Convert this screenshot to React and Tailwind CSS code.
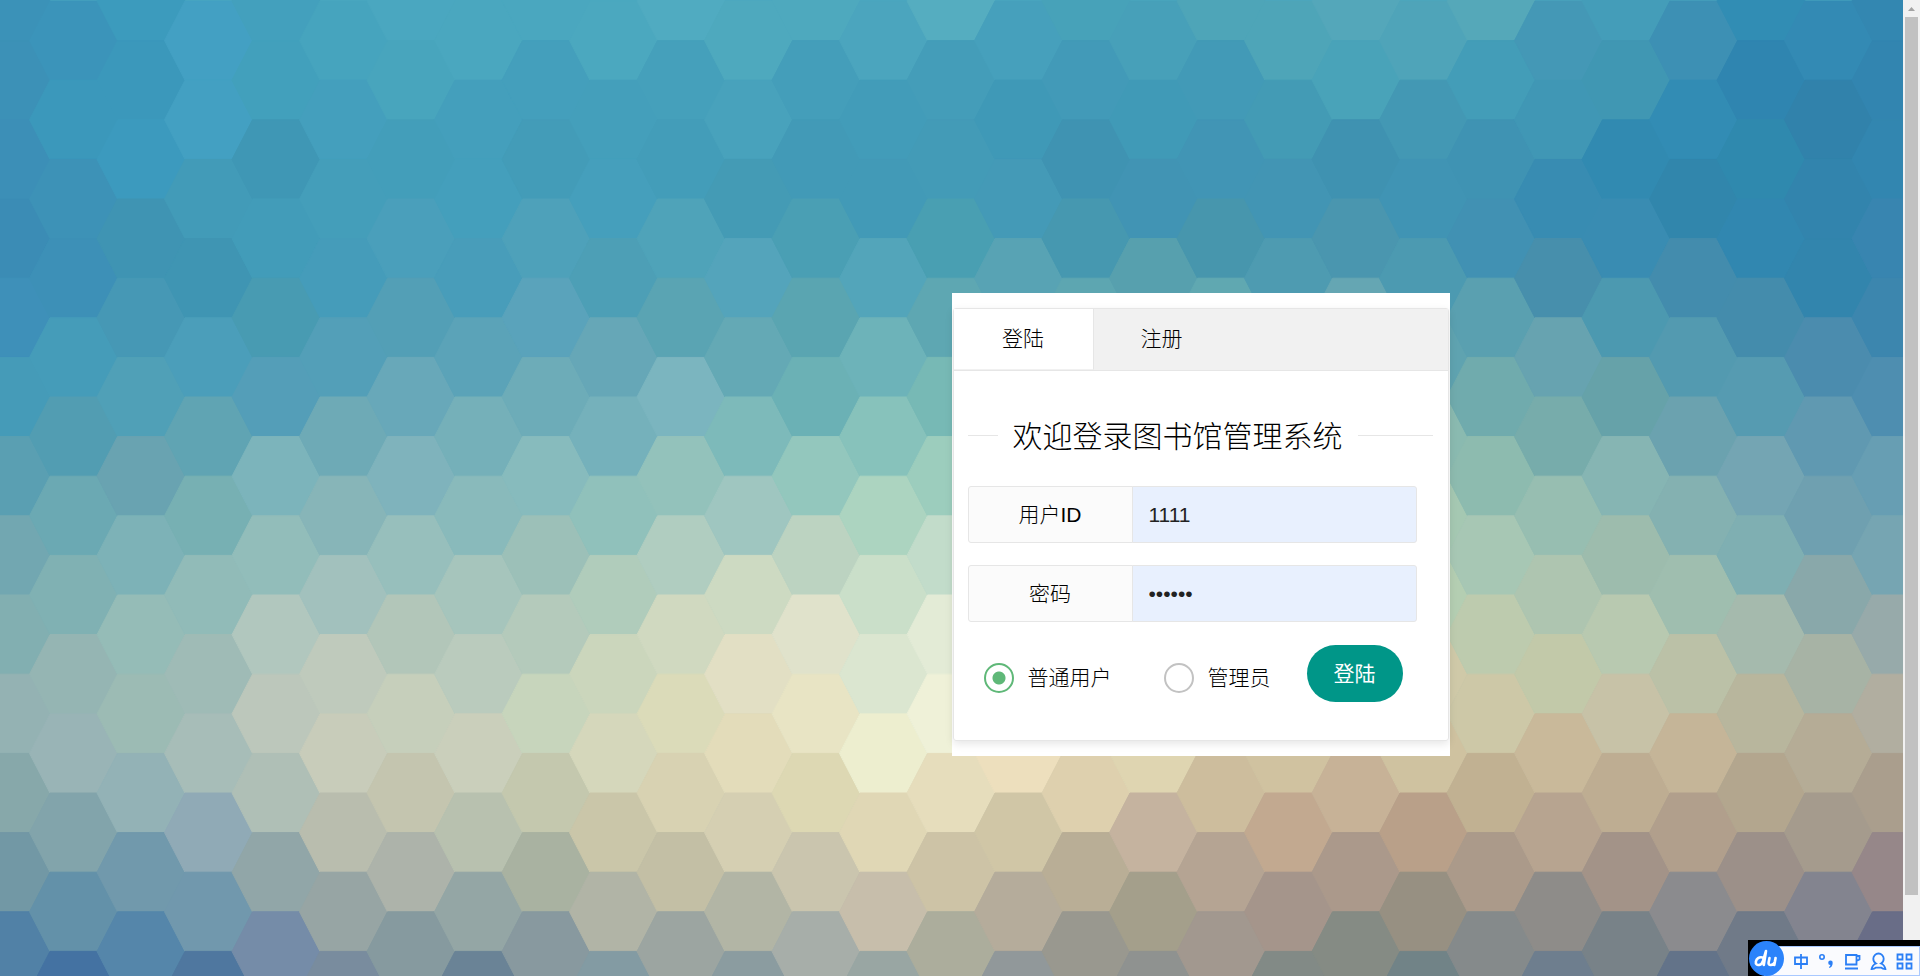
import React, { useState } from 'react';

// Honeycomb colours, one line per column, top to bottom
const COLUMNS = [
    '3b92b8 3c91b7 3c8fb7 3b8cb5 3e90b9 459bb8 5a9fb2 72a7b1 82afb1 94b2b3 87a8aa 7298a5 5181a6',
    '3b94ba 3b98bb 3d92b7 3d90b7 459cb9 529db2 6ba9b3 80b1b3 95b5b3 99b4b6 82a4ab 6391a9 4472a2',
    '3c9bbd 3b98bb 3c9abe 3f94b3 4698b5 50a0b7 69a3b1 7db2b7 95bcb7 9cbbb4 93b2b6 7199ac 5586aa',
    '43a0c3 43a0c2 429bb8 3f95b3 4b9eba 60a4b3 77b0b3 91bbb8 9fbbb6 a7bdb8 90aab6 7198ad 4f779f',
    '43a0bd 42a0bc 3f97b5 429cb9 489bb2 549eb8 7cb4bb 92bdba b1c7be bcc7bb afbfb6 91a6a8 758ca8',
    '46a4be 449fbd 449eba 459cba 539fb8 6eaab6 87b5b8 a2c1bd bfcabc c8ccba b9bdae 97a5a4 798c9e',
    '4aa7c0 48a5bd 439eba 4a9fbb 539fb6 68a8b9 7fb3bc 97bfbc b2c6b9 c6cfbb c4c5af adb3aa 869a9f',
    '4aa7bf 449fbc 449fbc 489dba 5ba3b8 75b0b9 89babb a6c5bc bacbbd cacfbb b8c1af 94a6a5 6a8396',
    '4aa7bf 449fbc 439cb8 4ea1ba 5aa3bb 6dacb8 87bbbd 9cc0b8 b4cabb c7d5bc c4c8ae a9b2a1 88999f',
    '4ba8bf 449fbb 459fbc 4d9fb6 66a7b7 75b1bb 90c1bb b0ccbb cbd6bc d5d7bb cac6a9 b1b4a6 839ba3',
    '50abc1 45a0bb 439db9 4fa3b9 5aa4b3 7bb5bf 93c2bb b0cdc0 d0d9c0 dbdbb9 d8d2b2 c3bfa5 9ca5a1',
    '4ea9be 48a2bc 449bb5 54a4bb 64a9b5 7dbaba 9fc6c0 cddac2 e2dfc4 e3dcba d5cfb2 b2b5a5 8b9ca0',
    '4ea9be 449eba 429ab7 4a9fb4 5aa5b1 6bb1b5 93c7bd bcd3c1 e0e2cb e8e4c4 ddd8b3 cac5ae a7aea9',
    '4ba5be 429cb9 429ab7 53a5ba 6db3b9 87c2bb acd4c0 cadfc9 dbe6d0 edeecf e0d7b5 c7beab 99a6a3',
    '55adc0 449db9 439bb7 499fb2 5ea7b2 77b9b5 9ccdbd c2dcca e3ebd6 eff1d8 e6ddbc cdc3a6 acad9c',
    '46a0bc 3f99b7 449ab7 58a3b4 6fb0b4 8ac0b8 b0d0bd cddcc6 e0e4cc eddfbd d0c6a6 b5ac9b 91989a',
    '47a2b9 429ab8 3f93b2 4698b0 5da6b1 78b5b2 9ac6b8 bdd3c0 dbdfc8 e4dfc0 ded0ae b9ae96 99988f',
    '47a0b9 409ab7 4194b4 57a0ae 6aacb0 86bab2 a8cab8 c5d5bd d6d8bb dfd5b1 c5b39f a49f8b 8f9290',
    '4ea5b8 429ab7 4195b5 4796ad 60a8b1 76b0b0 94c0b4 b2cdb8 cbd3b5 d5cfae cdbd9d b5a493 a2988f',
    '4ea5b8 439bb5 4295b4 4e9bb1 64a5b0 7cb1ae 9cc1b3 b5cab2 c8ccad d0c2a0 c2a990 a5958b 828a86',
    '54a7ba 49a3b9 3f92b1 4a96af 65a6b3 70abae 8fbcb1 a8c7b4 c2ceb0 cec6a6 c7b297 ab998b 858b84',
    '4fa4b9 4398b4 4094b4 4c9ab1 5fa3b0 8abab0 a5c8b2 b4ceb2 cfc9a8 cfc2a0 b9a089 979082 718387',
    '55a8b9 439db8 3f93b3 4191b3 5aa0b0 70abad 8dbbaf a7c7b4 bdcbae cdc8a7 c1b192 ab9a8a 858a8b',
    '4498b6 4097b5 388cb2 478fac 67a3b0 77acab 97beb1 aec5b0 c2c9a9 c9b99a b7a490 8e8c89 6e7e8e',
    '449db9 4097b3 318ab1 398cb2 4c99b0 66a2a9 86b5b3 9dbcad b8c9b0 c7c2a7 bead92 a39388 788288',
    '3d90b4 328cb4 3186ac 438cad 539ab0 6ba2af 84b1b1 9fbeaf bbc1a7 c5b598 b19f8c 8b8b8e 637389',
    '318db4 2f85b0 2f89ae 3187b0 448cac 569bb1 74a5b3 7fafb2 a5baad b8b69d b3a68e 9c9089 707a88',
    '338ab4 3182ab 3284ad 3285ad 4b8cae 6099b1 6fa0b0 89a8aa a7b3a5 b5ac96 a59b8d 83848f 69748a',
    '3387b1 3285b0 3286b0 3885b0 3c86ae 4e8eb0 679eb3 76a5b2 97aaaa b1aea0 aa9e8d 968789 696d87',
];

const COL_STEP = 67.5;
const ROW_STEP = 79.2;

const hexPoints = (cx, cy) => {
    const h = ROW_STEP / 2;
    return [
        [cx - 44, cy],
        [cx - 23.5, cy - h],
        [cx + 23.5, cy - h],
        [cx + 44, cy],
        [cx + 23.5, cy + h],
        [cx - 23.5, cy + h],
    ].map((p) => p.join(',')).join(' ');
};

const Honeycomb = () => (
    <svg
        className="absolute inset-0 h-full w-full bg-[#4aa7bf]"
        viewBox="0 0 1903 976"
        preserveAspectRatio="xMidYMid slice"
        aria-hidden="true"
    >
        {COLUMNS.map((column, c) =>
            column.split(' ').map((color, r) => {
                const cx = 6 + COL_STEP * c;
                const cy = 1 + ROW_STEP * r + (c % 2 ? ROW_STEP / 2 : 0);
                return (
                    <polygon
                        key={`${c}-${r}`}
                        points={hexPoints(cx, cy)}
                        fill={`#${color}`}
                        stroke={`#${color}`}
                        strokeWidth="1"
                    />
                );
            })
        )}
    </svg>
);

const Field = ({ id, label, type, value, onChange }) => (
    <div className="flex h-[57px]">
        <label
            htmlFor={id}
            className="flex w-[165px] items-center justify-center rounded-l-[3px] border border-[#e6e6e6] bg-[#fbfbfb]"
        >
            {label}
        </label>
        <input
            id={id}
            type={type}
            value={value}
            onChange={onChange}
            className="-ml-px w-[285px] rounded-r-[3px] border border-[#e6e6e6] bg-[#e8f0fe] px-4 font-normal text-[#222] outline-none"
        />
    </div>
);

const Role = ({ value, label, role, setRole }) => (
    <label className="mt-3 flex h-[42px] items-center gap-[14px]">
        <input
            type="radio"
            name="role"
            value={value}
            checked={role === value}
            onChange={() => setRole(value)}
            className="size-[30px] appearance-none rounded-full border-2 border-[#c2c2c2] checked:border-[#5fb878] checked:bg-[radial-gradient(circle,#5fb878_6px,transparent_7px)]"
        />
        {label}
    </label>
);

const LoginCard = () => {
    const [userId, setUserId] = useState('1111');
    const [password, setPassword] = useState('123456');
    const [role, setRole] = useState('user');

    return (
        <div className="relative w-[498px] bg-white px-px py-[15px] text-[21px] font-light text-black">
            <div className="rounded-[3px] border border-[#e6e6e6] shadow-[0_3px_8px_rgba(0,0,0,0.1)]">
                <div className="flex h-[62px] border-b border-[#e6e6e6] bg-[#f1f1f1]">
                    <button type="button" className="h-[61px] w-[140px] border-r border-b border-r-[#e6e6e6] border-b-[#f1f1f1] bg-white">
                        登陆
                    </button>
                    <button type="button" className="h-[61px] border-b border-[#f1f1f1] px-[47px]">
                        注册
                    </button>
                </div>

                <form className="pt-[41px] pr-[15px] pb-[38px] pl-[14px]" onSubmit={(e) => e.preventDefault()}>
                    <fieldset className="mb-[27px] border-t border-[#e6e6e6]">
                        <legend className="ml-[30px] px-[15px] pt-[2px] text-[30px] leading-[45px] font-extralight">
                            欢迎登录图书馆管理系统
                        </legend>
                    </fieldset>

                    <div className="flex flex-col gap-[22px]">
                        <Field id="userId" label="用户ID" type="text" value={userId} onChange={(e) => setUserId(e.target.value)} />
                        <Field id="password" label="密码" type="password" value={password} onChange={(e) => setPassword(e.target.value)} />
                    </div>

                    <div className="mt-[23px] flex items-start pl-4">
                        <Role value="user" label="普通用户" role={role} setRole={setRole} />
                        <div className="ml-[52px]">
                            <Role value="admin" label="管理员" role={role} setRole={setRole} />
                        </div>
                        <button type="submit" className="ml-9 h-[57px] w-24 rounded-full bg-[#009688] font-normal text-white">
                            登陆
                        </button>
                    </div>
                </form>
            </div>
        </div>
    );
};

const Scrollbar = () => (
    <div className="relative flex w-[17px] flex-none flex-col items-center bg-[#f1f1f1]">
        <svg className="h-[17px] w-[17px] flex-none" viewBox="0 0 17 17" aria-hidden="true">
            <path d="M5 11 L8.5 7 L12 11 Z" fill="#a3a3a3" />
        </svg>
        <div className="h-[90%] w-[13px] bg-[#c1c1c1]" />
    </div>
);

// Floating input method bar in the corner of the screen
const ImeBar = () => (
    <div className="absolute right-0 bottom-0 flex h-9 w-[172px] items-end bg-black">
        <div className="ml-4 flex h-[30px] flex-1 items-center justify-between border border-[#a9c9ff] bg-[#fafbfe] pr-[6px] pl-[28px] text-[#2b7ff5]">
            <svg width="16" height="18" viewBox="0 0 16 18" fill="none" stroke="currentColor" strokeWidth="1.8" aria-label="中">
                <path d="M2 5.500h12v6.500H2zM8 2v15" />
            </svg>
            <svg width="16" height="16" viewBox="0 0 16 16" fill="none" stroke="currentColor" strokeWidth="1.6" aria-hidden="true">
                <circle cx="4" cy="4" r="2.2" />
                <path d="M12.5 7.5a2.2 2.2 0 0 1 2.200 2.300c0 2.700-1.200 4.600-3.200 5.200l-.6-1.100c.9-.4 1.400-1 1.500-1.900a2.200 2.200 0 0 1 .1-4.500z" fill="currentColor" stroke="none" />
            </svg>
            <svg width="17" height="17" viewBox="0 0 17 17" fill="none" stroke="currentColor" strokeWidth="1.8" aria-hidden="true">
                <path d="M2 2h10.500v9.500H2zM12.500 3h3v3.500l-3 1.500M1 15.500h13" />
            </svg>
            <svg width="17" height="19" viewBox="0 0 17 19" fill="none" stroke="currentColor" strokeWidth="1.800" aria-hidden="true">
                <path d="M6 11.500C4.200 10.400 3.300 8.800 3.300 6.700a5.200 5.200 0 0 1 10.400 0c0 2.100-.9 3.700-2.700 4.800 2.400 1 4 3 4.400 5.500-2.200 0-3.200-.3-4.200-1.300H5.800c-1 1-2 1.300-4.200 1.300.4-2.500 2-4.500 4.400-5.500z" />
            </svg>
            <svg width="17" height="17" viewBox="0 0 17 17" fill="none" stroke="currentColor" strokeWidth="1.8" aria-hidden="true">
                <path d="M1.500 1.500h5v5h-5zM10.500 1.500h5v5h-5zM1.500 10.500h5v5h-5zM10.500 10.500h5v5h-5z" />
            </svg>
        </div>
        <div className="absolute bottom-0 left-px size-[35px] rounded-full bg-[#2b83fb]">
            <svg className="h-full w-full" viewBox="0 0 35 35" fill="none" stroke="#fff" strokeWidth="2.6" strokeLinecap="round" strokeLinejoin="round" aria-hidden="true">
                <path d="M13.500 16.500c-3.500-.8-6 1.200-6.600 4-.5 2.800 1.200 3.800 3.200 3.400 2-.4 3.400-1.800 3.900-4L17 10l-2.200 14" />
                <path d="M20.500 17l-.9 4.500c-.3 1.800.6 2.600 2.200 2.500 2-.1 3.500-1.300 4-3.200l.8-3.800-1.300 7" />
            </svg>
        </div>
    </div>
);

const App = () => (
    <div className="relative flex min-h-screen font-['Liberation_Sans','Noto_Sans_CJK_SC',sans-serif]">
        <main className="relative grid flex-1 grid-cols-2 content-start overflow-hidden pt-[30vh]">
            <Honeycomb />
            <div className="col-start-2">
                <LoginCard />
            </div>
        </main>
        <Scrollbar />
        <ImeBar />
    </div>
);

export default App;
